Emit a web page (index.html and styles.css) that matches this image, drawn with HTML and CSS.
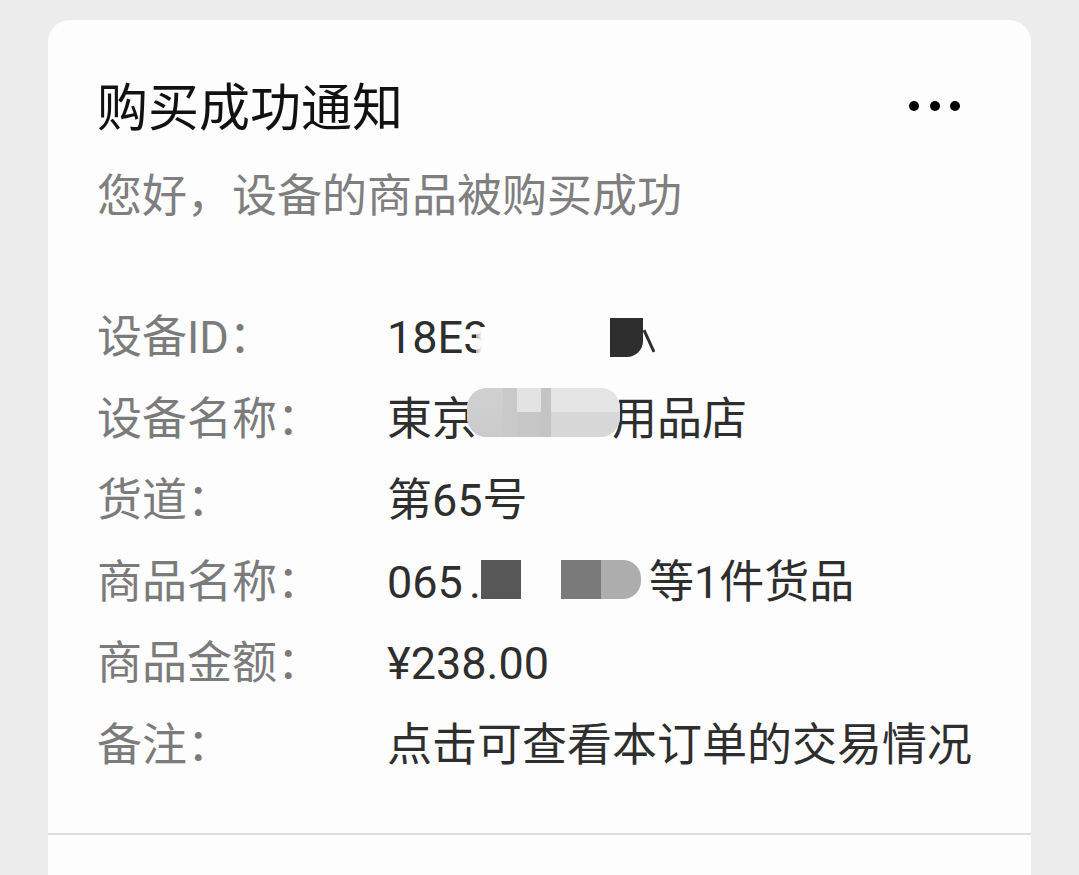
FILE: index.html
```html
<!DOCTYPE html>
<html lang="zh-CN">
<head>
  <meta charset="UTF-8">
  <meta name="viewport" content="width=device-width, initial-scale=1.0">
  <title>购买成功通知</title>
  <link rel="stylesheet" href="styles.css">
</head>
<body>

  <div class="card">
    <div class="card-head">
      <h2 class="title">购买成功通知</h2>
      <div class="more">
        <span></span><span></span><span></span>
      </div>
    </div>
    <p class="intro">您好，设备的商品被购买成功</p>

    <div class="rows">
      <div class="row">
        <span class="label">设备ID：</span>
        <span class="value">18E<span class="hide">3</span><span class="gap gap-id"></span><span class="blk blk-id"></span><svg class="stroke" width="12" height="39" viewBox="0 0 12 39"><path d="M1 12 L11 34" stroke="#2e2e2e" stroke-width="3" fill="none"/></svg></span>
      </div>
      <div class="row">
        <span class="label">设备名称：</span>
        <span class="value">東京<span class="mosaic"><i class="m1"></i><i class="m2"></i><i class="m3"></i></span>用品店</span>
      </div>
      <div class="row">
        <span class="label">货道：</span>
        <span class="value">第65号</span>
      </div>
      <div class="row">
        <span class="label">商品名称：</span>
        <span class="value">065<span class="dot">.</span><span class="blk blk-a"></span><span class="gap gap-b"></span><span class="blk blk-c"></span><span class="blk blk-d"></span>等1件货品</span>
      </div>
      <div class="row">
        <span class="label">商品金额：</span>
        <span class="value">¥238.00</span>
      </div>
      <div class="row">
        <span class="label">备注：</span>
        <span class="value">点击可查看本订单的交易情况</span>
      </div>
    </div>

    <div class="card-foot"></div>
  </div>

</body>
</html>
```

FILE: styles.css
```css
body {
  margin: 0;
  background-color: #ececec;
  font-family: Roboto, "Noto Sans CJK SC", sans-serif;
}

.card {
  margin: 20px 0 0 48px;
  width: 983px;
  background-color: #fdfdfd;
  border-radius: 22px 22px 0 0;
}

.card-head {
  display: flex;
  justify-content: space-between;
  align-items: center;
  padding: 59px 71px 0 49px;
}

.title {
  margin: 0;
  font-size: 51px;
  line-height: 60px;
  font-weight: normal;
  color: #111;
}

.more {
  display: flex;
  gap: 10.5px;
  margin-bottom: 6px;
}

.more span {
  width: 10px;
  height: 10px;
  border-radius: 50%;
  background-color: #000;
}

.intro {
  margin: 28px 0 0 49px;
  font-size: 45px;
  line-height: 60px;
  color: #7f7f7f;
}

.rows {
  padding: 70px 0 47px 49px;
}

.row {
  display: flex;
  font-size: 45px;
  line-height: 81.5px;
}

.label {
  width: 290px;
  color: #7b7b7b;
}

.value {
  color: #2e2e2e;
}

/* half-covered character */
.hide {
  position: relative;
}

.hide::after {
  content: "";
  position: absolute;
  top: 16px;
  right: -3px;
  width: 60%;
  height: 50px;
  background: linear-gradient(90deg, rgba(253, 253, 253, 0.6), #fdfdfd 40%);
}

.gap {
  display: inline-block;
  height: 1px;
}

.gap-id {
  width: 122px;
}

.gap-b {
  width: 40px;
}

.blk {
  display: inline-block;
  height: 39px;
}

.blk-id {
  width: 33px;
  vertical-align: -4px;
  background-color: #2e2e2e;
  border-radius: 0 0 16px 0;
}

.stroke {
  vertical-align: -4px;
}

.dot {
  display: inline-block;
  width: 18px;
  text-align: right;
}

.blk-a,
.blk-c,
.blk-d {
  width: 40px;
  vertical-align: -1px;
}

.blk-a {
  background-color: #575757;
}

.blk-c {
  background-color: #7a7a7a;
}

.blk-d {
  margin-right: 8px;
  background-color: #adadad;
  border-radius: 0 18px 18px 0;
}

/* blurred shop name, laid over the neighbouring characters */
.mosaic {
  position: relative;
  z-index: 1;
  display: inline-flex;
  width: 153px;
  height: 49px;
  margin: 0 -8px 0 -10px;
  vertical-align: -2px;
  border-radius: 20px;
  overflow: hidden;
  background-color: #d9d9d9;
}

.mosaic i {
  display: block;
  height: 100%;
}

.m1 {
  width: 36px;
  background: linear-gradient(#d0d0d0, #cbcbcb);
}

.m2 {
  width: 48px;
  background: linear-gradient(90deg, #c9c9c9 0 14px, transparent 14px 38px, #c4c4c4 38px),
              linear-gradient(#e3e3e3 0 48%, #c6c6c6 48%);
}

.m3 {
  width: 69px;
  background: linear-gradient(#e4e4e4 0 50%, #d7d7d7 50%);
}

.card-foot {
  height: 40px;
  border-top: 2px solid #dddddd;
}
```
